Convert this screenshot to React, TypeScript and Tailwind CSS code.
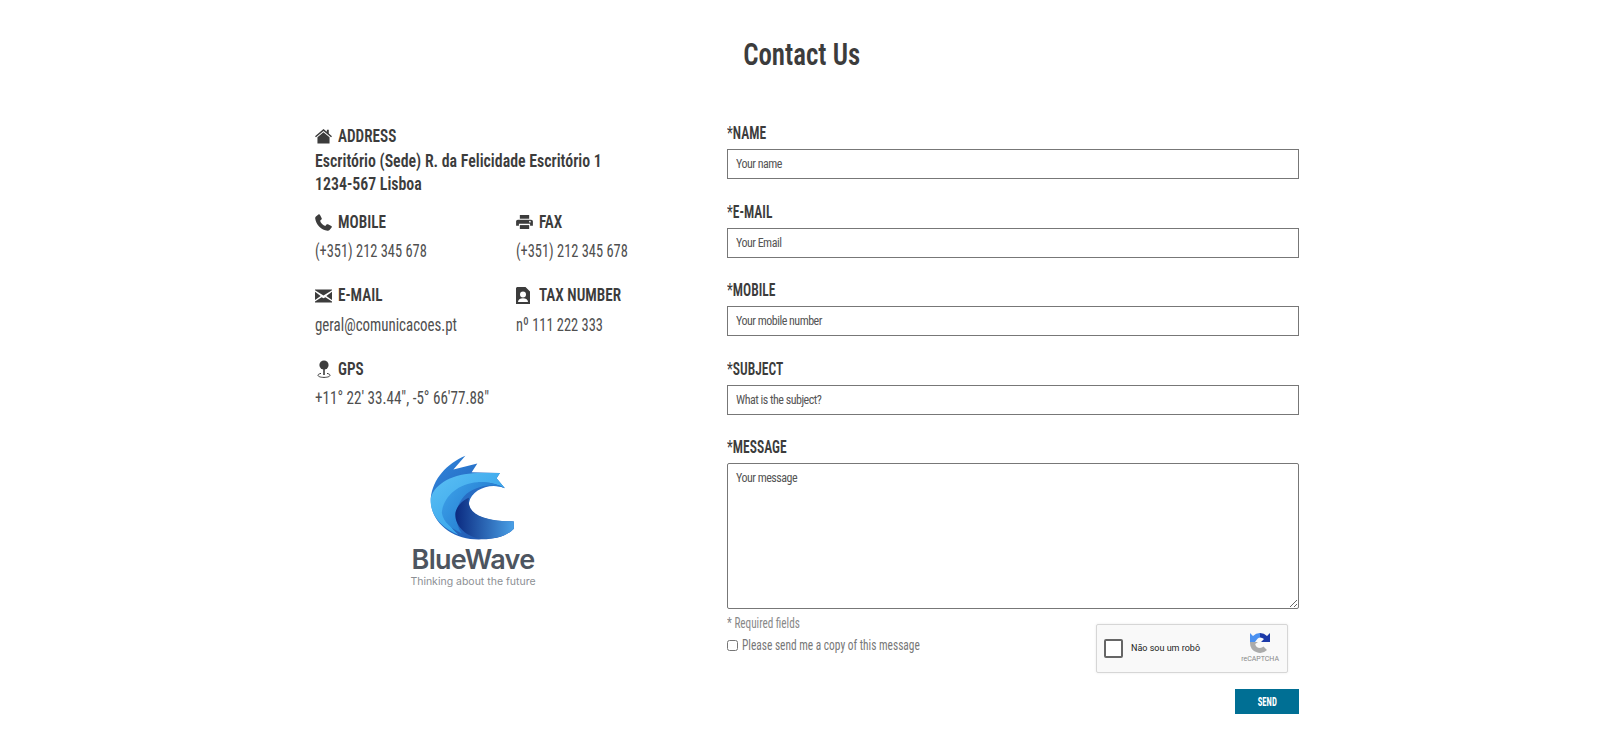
const condensed = "font-['Roboto_Condensed',Roboto,sans-serif]";

const HomeIcon = ({ className }: { className?: string }) => (
  <svg className={className} viewBox="0 0 18 16" fill="currentColor">
    <path d="M9 0.5 0 8.2 1 9.4 9 2.6 17 9.4 18 8.2 14.6 5.3V1.5H12.6V3.6Z" />
    <path d="M9 4 2.6 9.4V16H15.4V9.4Z" />
  </svg>
);

const PhoneIcon = ({ className }: { className?: string }) => (
  <svg className={className} viewBox="0 0 18 18" fill="currentColor">
    <path d="M1 2.6 3.6 0.4C4.2 0 4.8 0.1 5.2 0.7L7.1 4.4C7.4 5 7.2 5.5 6.8 5.9L5.4 7.1C6 9.4 8.6 12 10.9 12.6L12.2 11.2C12.6 10.8 13.1 10.6 13.7 10.9L17.3 12.8C17.9 13.2 18 13.8 17.6 14.4L15.4 17C14.9 17.6 14.2 17.9 13.3 17.8 6.6 16.8 1.2 11.4 0.2 4.7 0.1 3.8 0.4 3.1 1 2.6Z" />
  </svg>
);

const PrintIcon = ({ className }: { className?: string }) => (
  <svg className={className} viewBox="0 0 18 15" fill="currentColor">
    <path d="M4 0H14V4H4Z" />
    <path
      fillRule="evenodd"
      d="M2 5H16C17.2 5 18 5.8 18 7V11.5H15V9.5H3V11.5H0V7C0 5.8 0.8 5 2 5ZM14.8 6.2A0.9 0.9 0 1 0 14.8 8 0.9 0.9 0 1 0 14.8 6.2Z"
    />
    <path d="M4 10.8H14V15H4Z" />
  </svg>
);

const EnvelopeIcon = ({ className }: { className?: string }) => (
  <svg className={className} viewBox="0 0 18 14" fill="currentColor">
    <path d="M0 0.8 9 6.6 18 0.8V0H0Z" />
    <path d="M0 2.6V11.2L6 7ZM18 2.6V11.2L12 7ZM0 14H18V12.9L11 8.2 9 9.5 7 8.2 0 12.9Z" />
  </svg>
);

const TaxIcon = ({ className }: { className?: string }) => (
  <svg className={className} viewBox="0 0 14 17" fill="currentColor">
    <path
      fillRule="evenodd"
      d="M1 0H9.5L14 4.5V17H0V1ZM7 4.5A3 3 0 1 0 7 10.5 3 3 0 1 0 7 4.5ZM2 15H12C12 12.5 10 11.2 7 11.2S2 12.5 2 15Z"
    />
  </svg>
);

const GpsIcon = ({ className }: { className?: string }) => (
  <svg className={className} viewBox="0 0 14 18" fill="currentColor">
    <circle cx="7" cy="5" r="4.6" />
    <path d="M6.2 9H7.8V15H6.2Z" />
    <path
      d="M4 13.4C2 13.8 1 14.5 1 15.3 1 16.5 3.6 17.4 7 17.4S13 16.5 13 15.3C13 14.5 12 13.8 10 13.4"
      fill="none"
      stroke="currentColor"
      strokeWidth="1"
    />
  </svg>
);

const WaveLogo = () => (
  <svg className="h-[103px] w-[170px]" viewBox="0 0 510 310">
    <defs>
      <linearGradient id="waveBack" x1="0" y1="0" x2="1" y2="1">
        <stop offset="0" stopColor="#2f86dc" />
        <stop offset="1" stopColor="#1f4fa8" />
      </linearGradient>
      <linearGradient id="waveLight" x1="0" y1="0" x2="1" y2="1">
        <stop offset="0" stopColor="#5cc0f4" />
        <stop offset="1" stopColor="#2a9ae8" />
      </linearGradient>
      <linearGradient id="waveMid" x1="0" y1="0" x2="1" y2="0.6">
        <stop offset="0" stopColor="#3fa4ea" />
        <stop offset="1" stopColor="#1b6fc8" />
      </linearGradient>
      <linearGradient id="waveDark" x1="0" y1="0" x2="1" y2="0">
        <stop offset="0" stopColor="#0b2a80" />
        <stop offset="1" stopColor="#4aa0e6" />
      </linearGradient>
    </defs>
    <path
      d="M226 38 190 80 262 62 245 88 330 90 320 106 345 136C300 118 245 140 237 180 235 215 280 236 372 236L372 258C350 282 310 290 280 290 190 296 118 240 122 165 128 108 170 62 226 38Z"
      fill="url(#waveBack)"
    />
    <path
      d="M122 165C135 120 190 92 262 90L330 90 320 106 345 136C300 108 230 115 190 155 160 190 160 240 205 276 150 255 117 210 122 165Z"
      fill="url(#waveLight)"
    />
    <path
      d="M155 210C160 160 205 122 262 118 290 116 320 124 345 136 300 118 250 132 222 160 195 190 190 235 215 272 185 258 160 240 155 210Z"
      fill="url(#waveMid)"
    />
    <path
      d="M237 165C228 210 275 236 372 236L372 258C350 282 310 290 280 289 225 285 192 245 196 210 200 190 218 172 237 165Z"
      fill="url(#waveDark)"
    />
  </svg>
);

const RecaptchaIcon = () => (
  <svg className="mb-[2px] h-[20px] w-[20px]" viewBox="0 0 20 20">
    <path d="M10 0A10 10 0 0 1 17 3L20 0V9H11L14 6A6 6 0 0 0 10 4.5L8 2Z" fill="#1c3aa9" />
    <path d="M10 0A10 10 0 0 0 3 3L0 0V9H5L6.5 7C7.5 5.5 8.6 4.6 10 4.5Z" fill="#4a90f0" />
    <path d="M0 9V10A10 10 0 0 0 17 17L13.5 13.5A5 5 0 0 1 10 15 5 5 0 0 1 5.2 11L8 9Z" fill="#ababab" />
  </svg>
);

const InfoBlock = ({
  icon,
  title,
  value,
  valueClass = "scale-x-[0.76]",
}: {
  icon: React.ReactNode;
  title: string;
  value: string;
  valueClass?: string;
}) => (
  <div>
    <div className="flex h-[24px] items-center text-[19px] font-semibold text-[#3c3c3c]">
      <span className="flex w-[23px] shrink-0 items-center">{icon}</span>
      <span className="inline-block origin-left scale-x-[0.8] whitespace-nowrap">{title}</span>
    </div>
    <p className="mt-[5px] text-[19px] leading-[24px] text-[#4f4f4f]">
      <span className={`inline-block origin-left whitespace-nowrap ${valueClass}`}>{value}</span>
    </p>
  </div>
);

const FieldLabel = ({ text }: { text: string }) => (
  <label className="block origin-left scale-x-[0.75] text-[18px] leading-[20px] font-semibold whitespace-nowrap">
    <span className="font-normal">*</span>
    {text}
  </label>
);

const fields = [
  { label: "NAME", placeholder: "Your name" },
  { label: "E-MAIL", placeholder: "Your Email" },
  { label: "MOBILE", placeholder: "Your mobile number" },
  { label: "SUBJECT", placeholder: "What is the subject?" },
];

export default function App() {
  return (
    <div className={`min-h-[739px] bg-white pt-[31px] text-[#3c3c3c] ${condensed}`}>
      <h1 className="pl-[3px] text-center text-[32px] leading-[46px] font-semibold text-[#3c3c3c]">
        <span className="inline-block scale-x-[0.84]">Contact Us</span>
      </h1>

      <div className="mt-[46px] ml-[315px] flex w-[984px]">
        <div className="w-[412px] shrink-0">
          <div className="flex h-[26px] items-center text-[19px] font-semibold">
            <span className="flex w-[23px] shrink-0 items-center">
              <HomeIcon className="h-[16px] w-[17px]" />
            </span>
            <span className="inline-block origin-left scale-x-[0.8] whitespace-nowrap">ADDRESS</span>
          </div>
          <p className="text-[19px] leading-[23px] font-semibold">
            <span className="block origin-left scale-x-[0.835] whitespace-nowrap">
              Escritório (Sede) R. da Felicidade Escritório 1
            </span>
            <span className="block origin-left scale-x-[0.835] whitespace-nowrap">1234-567 Lisboa</span>
          </p>

          <div className="mt-[15px] grid grid-cols-[201px_1fr] gap-y-[20.5px]">
            <InfoBlock icon={<PhoneIcon className="h-[17px] w-[17px]" />} title="MOBILE" value="(+351) 212 345 678" />
            <InfoBlock icon={<PrintIcon className="h-[14px] w-[17px]" />} title="FAX" value="(+351) 212 345 678" />
            <InfoBlock
              icon={<EnvelopeIcon className="h-[14px] w-[17px]" />}
              title="E-MAIL"
              value="geral@comunicacoes.pt"
              valueClass="scale-x-[0.785]"
            />
            <InfoBlock icon={<TaxIcon className="h-[17px] w-[14px]" />} title="TAX NUMBER" value="nº 111 222 333" />
            <InfoBlock
              icon={<GpsIcon className="ml-[2px] h-[18px] w-[14px]" />}
              title="GPS"
              value={'+11° 22\' 33.44", -5° 66\'77.88"'}
              valueClass="scale-x-[0.795]"
            />
          </div>

          <div className="mt-[33px] ml-[75px] flex w-[170px] flex-col items-center">
            <WaveLogo />
            <span className="-mt-[1px] -ml-[4px] font-['Inter',sans-serif] text-[27px] leading-[30px] font-semibold tracking-[-0.7px] text-[#4d5560]">
              BlueWave
            </span>
            <span className="-ml-[4px] font-['Inter',sans-serif] text-[10.5px] leading-[14px] text-[#8c8f94]">
              Thinking about the future
            </span>
          </div>
        </div>

        <form className="w-[572px]">
          {fields.map((field) => (
            <div key={field.label} className="mb-[22.5px]">
              <FieldLabel text={field.label} />
              <input
                placeholder={field.placeholder}
                className="mt-[6px] block h-[30px] w-full border border-[#777] px-[8px] text-[12px] tracking-[-0.5px] text-[#444] placeholder:text-[#555]"
              />
            </div>
          ))}
          <FieldLabel text="MESSAGE" />
          <textarea
            placeholder="Your message"
            className="mt-[6px] block h-[146px] w-full rounded-[2px] border border-[#777] px-[8px] py-[5px] text-[12px] tracking-[-0.5px] text-[#444] placeholder:text-[#555]"
          />

          <div className="mt-[5px] flex">
            <div className="w-[369px] shrink-0">
              <p className="origin-left scale-x-[0.8] text-[14px] leading-[18px] whitespace-nowrap text-[#888]">
                * Required fields
              </p>
              <label className="mt-[4px] flex items-center text-[15px] leading-[18px] text-[#777]">
                <input type="checkbox" className="mr-[4px] h-[11px] w-[11px]" />
                <span className="origin-left scale-x-[0.76] whitespace-nowrap">
                  Please send me a copy of this message
                </span>
              </label>
            </div>
            <div className="mt-[10px] flex h-[49px] w-[192px] items-center rounded-[2px] border border-[#d6d6d6] bg-[#f9f9f9] pl-[7px] shadow-[0_0_3px_rgba(0,0,0,0.08)]">
              <span className="h-[19px] w-[19px] rounded-[2px] border-2 border-[#666] bg-white" />
              <span className="ml-[8px] font-['Roboto',sans-serif] text-[9px] text-[#222]">Não sou um robô</span>
              <span className="mr-[8px] ml-auto flex flex-col items-center">
                <RecaptchaIcon />
                <span className="font-['Roboto',sans-serif] text-[7px] leading-[9px] text-[#888]">reCAPTCHA</span>
              </span>
            </div>
          </div>

          <div className="mt-[16px] flex justify-end">
            <button type="button" className="h-[25px] w-[64px] bg-[#006f94] text-[12px] font-bold text-white">
              <span className="inline-block scale-x-[0.72]">SEND</span>
            </button>
          </div>
        </form>
      </div>
    </div>
  );
}
